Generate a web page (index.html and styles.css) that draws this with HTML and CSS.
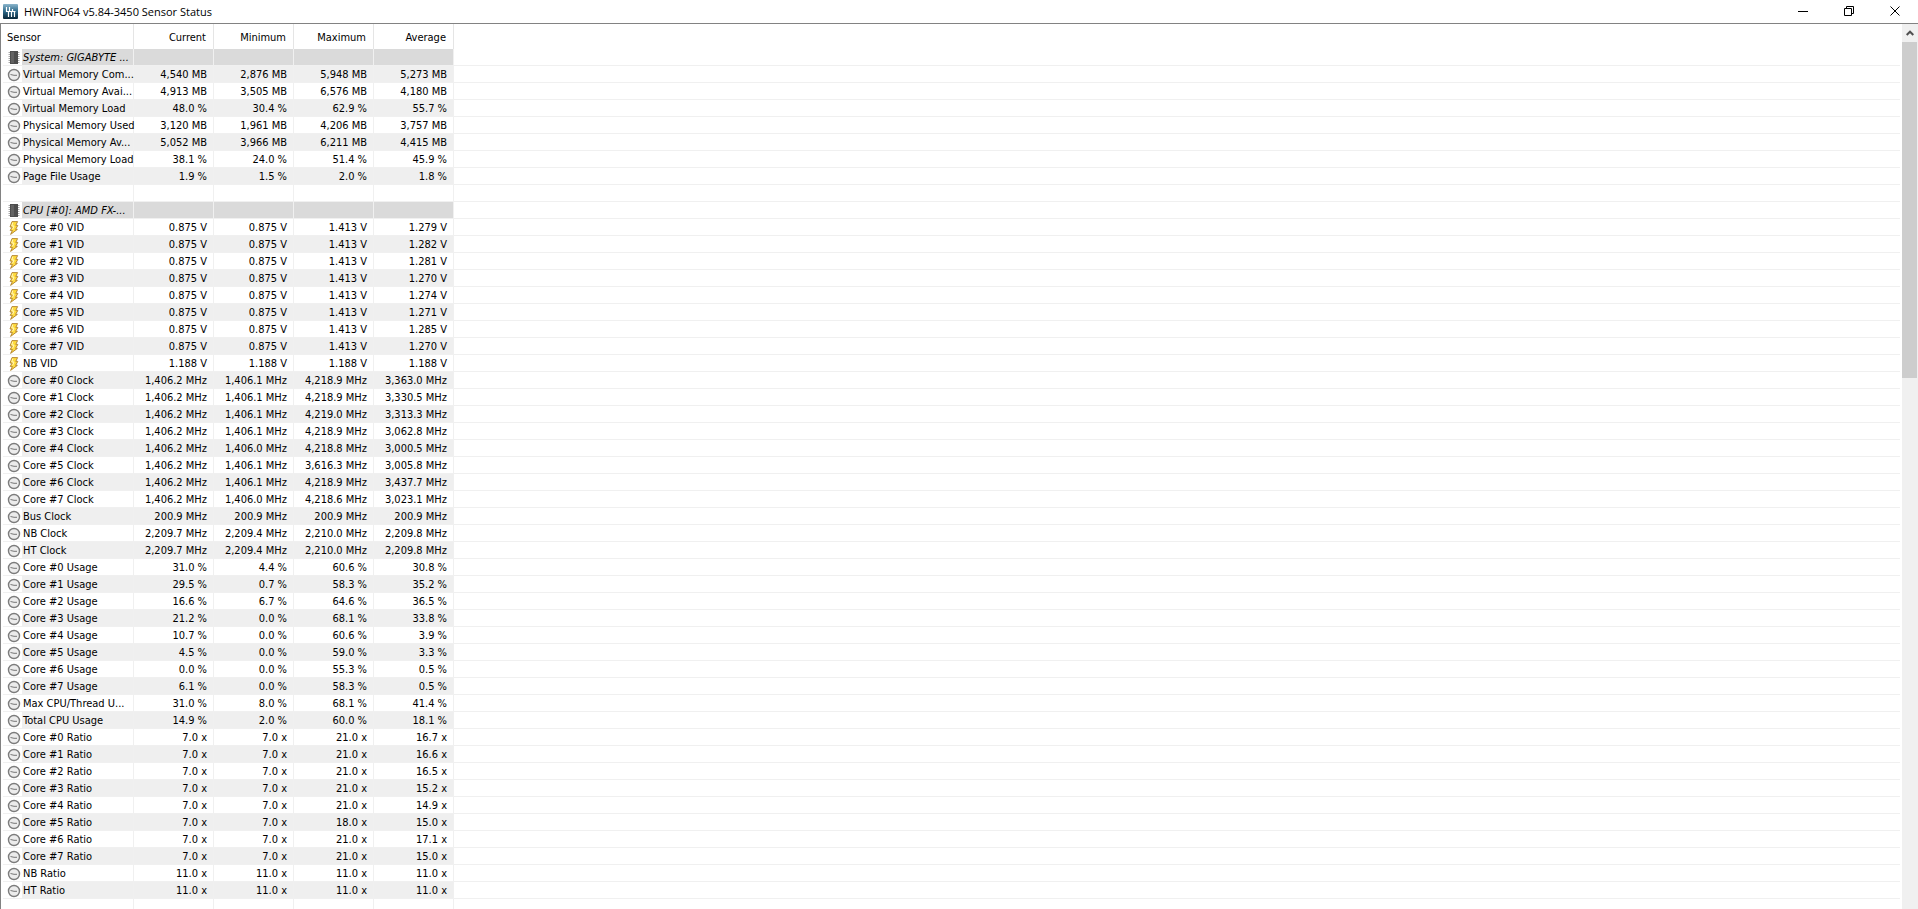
FILE: index.html
```
<!DOCTYPE html>
<html lang="en">
	<head>
	<meta charset="utf-8">
	<title>HWiNFO64 v5.84-3450 Sensor Status</title>
	<link rel="stylesheet" href="styles.css">
	</head>

	<body>
		<!-- shared row icons -->
		<svg class="defs" aria-hidden="true">
			<symbol id="clock" viewBox="0 0 14 14">
				<circle cx="7" cy="7" r="5.5" fill="#ececec" stroke="#7c7c7c" stroke-width="1.4"/>
				<path d="M3.5 6.5L7 7.3H10" fill="none" stroke="#777" stroke-width="1"/>
			</symbol>
			<symbol id="chip" viewBox="0 0 14 14">
				<path d="M1.5 1.5h11M1.5 3.5h11M1.5 5.5h11M1.5 7.5h11M1.5 9.5h11M1.5 11.5h11" stroke="#aaa"/>
				<path d="M3 0h8v13H3z" fill="#4d4d4d"/>
				<path d="M4 1h3v11H4z" fill="#626262"/>
			</symbol>
			<symbol id="bolt" viewBox="0 0 14 14">
				<path d="M5 .6H10.6L8.8 4.4H10.8L8.6 8.4H10.4L3.6 13.4L5.4 9.4H3.2L5.2 6H3Z" fill="#ffdc3c" stroke="#b08030" stroke-width=".9"/>
				<path d="M5.8 1.6L4.8 5H7L5.6 8.4" fill="none" stroke="#fff6bd" stroke-width="1"/>
			</symbol>
		</svg>

		<div class="window">
			<header class="titlebar">
				<svg class="logo" viewBox="0 0 15 15" aria-hidden="true">
					<defs>
						<linearGradient id="sky" x1="0" y1="0" x2="0" y2="1">
							<stop offset="0" stop-color="#8cb6cc"/>
							<stop offset=".5" stop-color="#2b6788"/>
							<stop offset="1" stop-color="#082638"/>
						</linearGradient>
					</defs>
					<rect width="15" height="15" rx="1" fill="url(#sky)"/>
					<path d="M3.5 3v5M6.5 3v4M9.5 5v2M3 7.5h9.500M5.500 8v5M8.500 8v5M11.500 7v6" fill="none" stroke="#fff" stroke-width="1.2"/>
				</svg>
				<h1>HWiNFO64 v5.84-3450 Sensor Status</h1>
				<div class="controls">
					<button type="button" aria-label="Minimize"><svg viewBox="0 0 11 11"><path d="M0 5.5h10"/></svg></button>
					<button type="button" aria-label="Restore"><svg viewBox="0 0 11 11"><path d="M.5 2.5h7v7h-7zM2.5 2.5v-2h7v7h-2"/></svg></button>
					<button type="button" aria-label="Close"><svg viewBox="0 0 11 11"><path d="M.5 .5l9 9M9.5 .5l-9 9"/></svg></button>
				</div>
			</header>

			<main class="content">
				<div class="list">
					<table>
						<colgroup>
							<col class="c-icon"><col class="c-name"><col class="c-val"><col class="c-val"><col class="c-val"><col class="c-val"><col>
						</colgroup>
						<thead>
							<tr><th colspan="2">Sensor</th><th>Current</th><th>Minimum</th><th>Maximum</th><th>Average</th><td></td></tr>
						</thead>
						<tbody>
							<tr class="group"><td><svg><use href="#chip"/></svg></td><td>System: GIGABYTE ...</td><td></td><td></td><td></td><td></td><td></td></tr>
							<tr><td><svg><use href="#clock"/></svg></td><td>Virtual Memory Com...</td><td>4,540 MB</td><td>2,876 MB</td><td>5,948 MB</td><td>5,273 MB</td><td></td></tr>
							<tr><td><svg><use href="#clock"/></svg></td><td>Virtual Memory Avai...</td><td>4,913 MB</td><td>3,505 MB</td><td>6,576 MB</td><td>4,180 MB</td><td></td></tr>
							<tr><td><svg><use href="#clock"/></svg></td><td>Virtual Memory Load</td><td>48.0 %</td><td>30.4 %</td><td>62.9 %</td><td>55.7 %</td><td></td></tr>
							<tr><td><svg><use href="#clock"/></svg></td><td>Physical Memory Used</td><td>3,120 MB</td><td>1,961 MB</td><td>4,206 MB</td><td>3,757 MB</td><td></td></tr>
							<tr><td><svg><use href="#clock"/></svg></td><td>Physical Memory Av...</td><td>5,052 MB</td><td>3,966 MB</td><td>6,211 MB</td><td>4,415 MB</td><td></td></tr>
							<tr><td><svg><use href="#clock"/></svg></td><td>Physical Memory Load</td><td>38.1 %</td><td>24.0 %</td><td>51.4 %</td><td>45.9 %</td><td></td></tr>
							<tr><td><svg><use href="#clock"/></svg></td><td>Page File Usage</td><td>1.9 %</td><td>1.5 %</td><td>2.0 %</td><td>1.8 %</td><td></td></tr>
							<tr><td></td><td></td><td></td><td></td><td></td><td></td><td></td></tr>
							<tr class="group"><td><svg><use href="#chip"/></svg></td><td>CPU [#0]: AMD FX-...</td><td></td><td></td><td></td><td></td><td></td></tr>
							<tr><td><svg><use href="#bolt"/></svg></td><td>Core #0 VID</td><td>0.875 V</td><td>0.875 V</td><td>1.413 V</td><td>1.279 V</td><td></td></tr>
							<tr><td><svg><use href="#bolt"/></svg></td><td>Core #1 VID</td><td>0.875 V</td><td>0.875 V</td><td>1.413 V</td><td>1.282 V</td><td></td></tr>
							<tr><td><svg><use href="#bolt"/></svg></td><td>Core #2 VID</td><td>0.875 V</td><td>0.875 V</td><td>1.413 V</td><td>1.281 V</td><td></td></tr>
							<tr><td><svg><use href="#bolt"/></svg></td><td>Core #3 VID</td><td>0.875 V</td><td>0.875 V</td><td>1.413 V</td><td>1.270 V</td><td></td></tr>
							<tr><td><svg><use href="#bolt"/></svg></td><td>Core #4 VID</td><td>0.875 V</td><td>0.875 V</td><td>1.413 V</td><td>1.274 V</td><td></td></tr>
							<tr><td><svg><use href="#bolt"/></svg></td><td>Core #5 VID</td><td>0.875 V</td><td>0.875 V</td><td>1.413 V</td><td>1.271 V</td><td></td></tr>
							<tr><td><svg><use href="#bolt"/></svg></td><td>Core #6 VID</td><td>0.875 V</td><td>0.875 V</td><td>1.413 V</td><td>1.285 V</td><td></td></tr>
							<tr><td><svg><use href="#bolt"/></svg></td><td>Core #7 VID</td><td>0.875 V</td><td>0.875 V</td><td>1.413 V</td><td>1.270 V</td><td></td></tr>
							<tr><td><svg><use href="#bolt"/></svg></td><td>NB VID</td><td>1.188 V</td><td>1.188 V</td><td>1.188 V</td><td>1.188 V</td><td></td></tr>
							<tr><td><svg><use href="#clock"/></svg></td><td>Core #0 Clock</td><td>1,406.2 MHz</td><td>1,406.1 MHz</td><td>4,218.9 MHz</td><td>3,363.0 MHz</td><td></td></tr>
							<tr><td><svg><use href="#clock"/></svg></td><td>Core #1 Clock</td><td>1,406.2 MHz</td><td>1,406.1 MHz</td><td>4,218.9 MHz</td><td>3,330.5 MHz</td><td></td></tr>
							<tr><td><svg><use href="#clock"/></svg></td><td>Core #2 Clock</td><td>1,406.2 MHz</td><td>1,406.1 MHz</td><td>4,219.0 MHz</td><td>3,313.3 MHz</td><td></td></tr>
							<tr><td><svg><use href="#clock"/></svg></td><td>Core #3 Clock</td><td>1,406.2 MHz</td><td>1,406.1 MHz</td><td>4,218.9 MHz</td><td>3,062.8 MHz</td><td></td></tr>
							<tr><td><svg><use href="#clock"/></svg></td><td>Core #4 Clock</td><td>1,406.2 MHz</td><td>1,406.0 MHz</td><td>4,218.8 MHz</td><td>3,000.5 MHz</td><td></td></tr>
							<tr><td><svg><use href="#clock"/></svg></td><td>Core #5 Clock</td><td>1,406.2 MHz</td><td>1,406.1 MHz</td><td>3,616.3 MHz</td><td>3,005.8 MHz</td><td></td></tr>
							<tr><td><svg><use href="#clock"/></svg></td><td>Core #6 Clock</td><td>1,406.2 MHz</td><td>1,406.1 MHz</td><td>4,218.9 MHz</td><td>3,437.7 MHz</td><td></td></tr>
							<tr><td><svg><use href="#clock"/></svg></td><td>Core #7 Clock</td><td>1,406.2 MHz</td><td>1,406.0 MHz</td><td>4,218.6 MHz</td><td>3,023.1 MHz</td><td></td></tr>
							<tr><td><svg><use href="#clock"/></svg></td><td>Bus Clock</td><td>200.9 MHz</td><td>200.9 MHz</td><td>200.9 MHz</td><td>200.9 MHz</td><td></td></tr>
							<tr><td><svg><use href="#clock"/></svg></td><td>NB Clock</td><td>2,209.7 MHz</td><td>2,209.4 MHz</td><td>2,210.0 MHz</td><td>2,209.8 MHz</td><td></td></tr>
							<tr><td><svg><use href="#clock"/></svg></td><td>HT Clock</td><td>2,209.7 MHz</td><td>2,209.4 MHz</td><td>2,210.0 MHz</td><td>2,209.8 MHz</td><td></td></tr>
							<tr><td><svg><use href="#clock"/></svg></td><td>Core #0 Usage</td><td>31.0 %</td><td>4.4 %</td><td>60.6 %</td><td>30.8 %</td><td></td></tr>
							<tr><td><svg><use href="#clock"/></svg></td><td>Core #1 Usage</td><td>29.5 %</td><td>0.7 %</td><td>58.3 %</td><td>35.2 %</td><td></td></tr>
							<tr><td><svg><use href="#clock"/></svg></td><td>Core #2 Usage</td><td>16.6 %</td><td>6.7 %</td><td>64.6 %</td><td>36.5 %</td><td></td></tr>
							<tr><td><svg><use href="#clock"/></svg></td><td>Core #3 Usage</td><td>21.2 %</td><td>0.0 %</td><td>68.1 %</td><td>33.8 %</td><td></td></tr>
							<tr><td><svg><use href="#clock"/></svg></td><td>Core #4 Usage</td><td>10.7 %</td><td>0.0 %</td><td>60.6 %</td><td>3.9 %</td><td></td></tr>
							<tr><td><svg><use href="#clock"/></svg></td><td>Core #5 Usage</td><td>4.5 %</td><td>0.0 %</td><td>59.0 %</td><td>3.3 %</td><td></td></tr>
							<tr><td><svg><use href="#clock"/></svg></td><td>Core #6 Usage</td><td>0.0 %</td><td>0.0 %</td><td>55.3 %</td><td>0.5 %</td><td></td></tr>
							<tr><td><svg><use href="#clock"/></svg></td><td>Core #7 Usage</td><td>6.1 %</td><td>0.0 %</td><td>58.3 %</td><td>0.5 %</td><td></td></tr>
							<tr><td><svg><use href="#clock"/></svg></td><td>Max CPU/Thread U...</td><td>31.0 %</td><td>8.0 %</td><td>68.1 %</td><td>41.4 %</td><td></td></tr>
							<tr><td><svg><use href="#clock"/></svg></td><td>Total CPU Usage</td><td>14.9 %</td><td>2.0 %</td><td>60.0 %</td><td>18.1 %</td><td></td></tr>
							<tr><td><svg><use href="#clock"/></svg></td><td>Core #0 Ratio</td><td>7.0 x</td><td>7.0 x</td><td>21.0 x</td><td>16.7 x</td><td></td></tr>
							<tr><td><svg><use href="#clock"/></svg></td><td>Core #1 Ratio</td><td>7.0 x</td><td>7.0 x</td><td>21.0 x</td><td>16.6 x</td><td></td></tr>
							<tr><td><svg><use href="#clock"/></svg></td><td>Core #2 Ratio</td><td>7.0 x</td><td>7.0 x</td><td>21.0 x</td><td>16.5 x</td><td></td></tr>
							<tr><td><svg><use href="#clock"/></svg></td><td>Core #3 Ratio</td><td>7.0 x</td><td>7.0 x</td><td>21.0 x</td><td>15.2 x</td><td></td></tr>
							<tr><td><svg><use href="#clock"/></svg></td><td>Core #4 Ratio</td><td>7.0 x</td><td>7.0 x</td><td>21.0 x</td><td>14.9 x</td><td></td></tr>
							<tr><td><svg><use href="#clock"/></svg></td><td>Core #5 Ratio</td><td>7.0 x</td><td>7.0 x</td><td>18.0 x</td><td>15.0 x</td><td></td></tr>
							<tr><td><svg><use href="#clock"/></svg></td><td>Core #6 Ratio</td><td>7.0 x</td><td>7.0 x</td><td>21.0 x</td><td>17.1 x</td><td></td></tr>
							<tr><td><svg><use href="#clock"/></svg></td><td>Core #7 Ratio</td><td>7.0 x</td><td>7.0 x</td><td>21.0 x</td><td>15.0 x</td><td></td></tr>
							<tr><td><svg><use href="#clock"/></svg></td><td>NB Ratio</td><td>11.0 x</td><td>11.0 x</td><td>11.0 x</td><td>11.0 x</td><td></td></tr>
							<tr><td><svg><use href="#clock"/></svg></td><td>HT Ratio</td><td>11.0 x</td><td>11.0 x</td><td>11.0 x</td><td>11.0 x</td><td></td></tr>
							<tr><td></td><td></td><td></td><td></td><td></td><td></td><td></td></tr>
						</tbody>
					</table>
				</div>

				<div class="scrollbar">
					<button type="button" aria-label="Scroll up"><svg viewBox="0 0 8 6"><path d="M.7 5L4 1.7L7.3 5"/></svg></button>
					<div class="thumb"></div>
				</div>
			</main>
		</div>
	</body>
</html>
```
FILE: styles.css
```
* {
	box-sizing: border-box;
}

body {
	margin: 0;
	background: #fff;
	color: #000;
	font-family: "DejaVu Sans Condensed", "DejaVu Sans", sans-serif;
	font-size: 11px;
}

button {
	display: flex;
	align-items: center;
	justify-content: center;
	padding: 0;
	border: 0;
	background: none;
}

.defs {
	display: none;
}

.window {
	display: flex;
	flex-direction: column;
	height: 100vh;
	overflow: hidden;
}

/* title bar */
.titlebar {
	display: flex;
	align-items: center;
	gap: 6px;
	height: 23px;
	padding-left: 3px;
	flex: none;
}

.logo {
	width: 15px;
	height: 15px;
}

.titlebar h1 {
	flex: 1;
	margin: 0;
	font: 400 11px/22px "Open Sans", sans-serif;
}

.controls {
	display: flex;
}

.controls button {
	width: 46px;
	height: 22px;
}

.controls svg {
	width: 11px;
	height: 11px;
	fill: none;
	stroke: #000;
}

/* sensor list */
.content {
	display: flex;
	flex: 1;
	min-height: 0;
	border-top: 1px solid #828282;
	border-left: 1px solid #828282;
}

.list {
	flex: 1;
	overflow: hidden;
	padding: 0 2px;
}

table {
	width: 100%;
	table-layout: fixed;
	border-spacing: 0;
}

.c-icon {
	width: 19px;
}

.c-name {
	width: 112px;
}

.c-val {
	width: 80px;
}

th {
	height: 25px;
	padding: 0 7px 3px 0;
	border-right: 1px solid #e5e5e5;
	font-weight: 400;
	text-align: right;
	vertical-align: bottom;
	line-height: 16px;
}

th:first-child {
	padding-left: 4px;
	text-align: left;
}

tbody td {
	height: 17px;
	padding: 2px 6px 0 0;
	border-right: 1px solid #f0f0f0;
	border-bottom: 1px solid #f0f0f0;
	line-height: 14px;
	text-align: right;
	white-space: nowrap;
}

tbody td:first-child {
	padding: 2px 0 0 4px;
	border-right: 0;
}

tbody td:nth-child(2) {
	padding: 2px 0 0 1px;
	text-align: left;
}

tbody td:last-child {
	border-right: 0;
}

tbody tr:nth-child(even) td:not(:first-child):not(:last-child) {
	background: #efefef;
}

tbody tr.group td:not(:first-child):not(:last-child) {
	background: #dadada;
}

.group td {
	font-style: italic;
}

td svg {
	display: block;
	width: 14px;
	height: 14px;
}

/* scrollbar */
.scrollbar {
	width: 16px;
	padding-right: 1px;
	background: #f0f0f0;
}

.scrollbar button {
	width: 15px;
	height: 18px;
}

.scrollbar svg {
	width: 8px;
	height: 6px;
	fill: none;
	stroke: #505050;
	stroke-width: 2;
}

.thumb {
	height: 38%;
	background: #cdcdcd;
}
```
